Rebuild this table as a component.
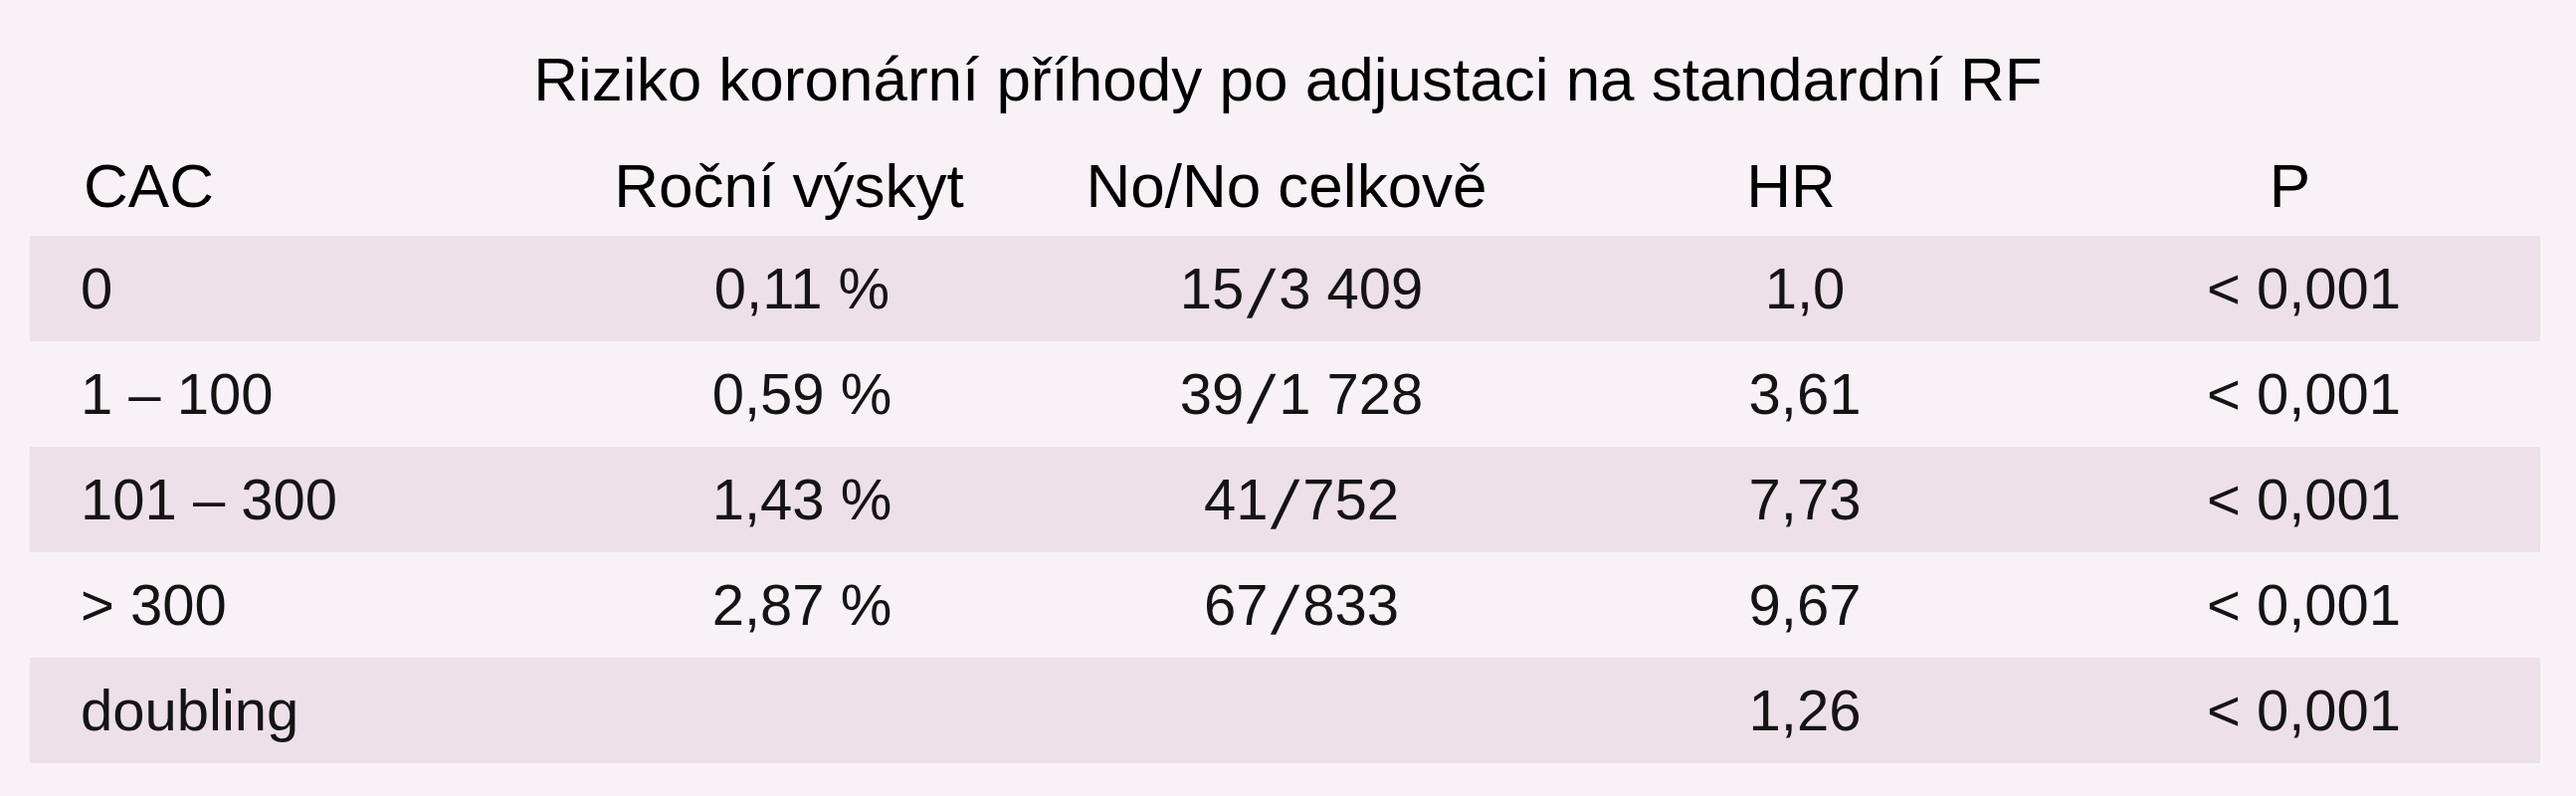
import React from 'react';

const rows = [
  { cac: '0', rocni: '0,11 %', nono: ['15', '3 409'], hr: '1,0', p: '< 0,001', shaded: true },
  { cac: '1 – 100', rocni: '0,59 %', nono: ['39', '1 728'], hr: '3,61', p: '< 0,001', shaded: false },
  { cac: '101 – 300', rocni: '1,43 %', nono: ['41', '752'], hr: '7,73', p: '< 0,001', shaded: true },
  { cac: '> 300', rocni: '2,87 %', nono: ['67', '833'], hr: '9,67', p: '< 0,001', shaded: false },
  { cac: 'doubling', rocni: '', nono: null, hr: '1,26', p: '< 0,001', shaded: true },
];

const cols = 'grid grid-cols-[526px_500px_504px_508px_1fr]';

const App = () => {
  return (
    <div
      className="w-[2589px] h-[800px] bg-[#f8f2f6] text-[#141414] overflow-hidden"
      style={{ fontFamily: '"Liberation Sans", Arial, sans-serif' }}
    >
      <h1 className="pt-[49px] text-center text-[62px] leading-[62px] font-normal text-black">
        Riziko koronární příhody po adjustaci na standardní RF
      </h1>

      <div className="mx-[30px] w-[2523px]">
        <div className={`${cols} mt-[45px] mb-[19px] h-[62px] text-[62px] leading-[62px] text-black`}>
          <div className="pl-[54px]">CAC</div>
          <div className="text-center pr-[26px]">Roční výskyt</div>
          <div className="text-center pr-[30px]">No/No celkově</div>
          <div className="text-center pr-[28px]">HR</div>
          <div className="text-center pr-[18px]">P</div>
        </div>

        {rows.map((r) => (
          <div
            key={r.cac}
            className={`${cols} h-[106px] items-center text-[58px] leading-none ${r.shaded ? 'bg-[#eee0e8]' : ''}`}
          >
            <div className="pl-[51px]">{r.cac}</div>
            <div className="text-center">{r.rocni}</div>
            <div className="text-center">
              {r.nono && (
                <>
                  {r.nono[0]}
                  <span className="inline-block relative top-[9px] mx-[8px] text-[68px] leading-[0] -skew-x-12">/</span>
                  {r.nono[1]}
                </>
              )}
            </div>
            <div className="text-center">{r.hr}</div>
            <div className="text-center pl-[10px]">{r.p}</div>
          </div>
        ))}
      </div>
    </div>
  );
};

export default App;
